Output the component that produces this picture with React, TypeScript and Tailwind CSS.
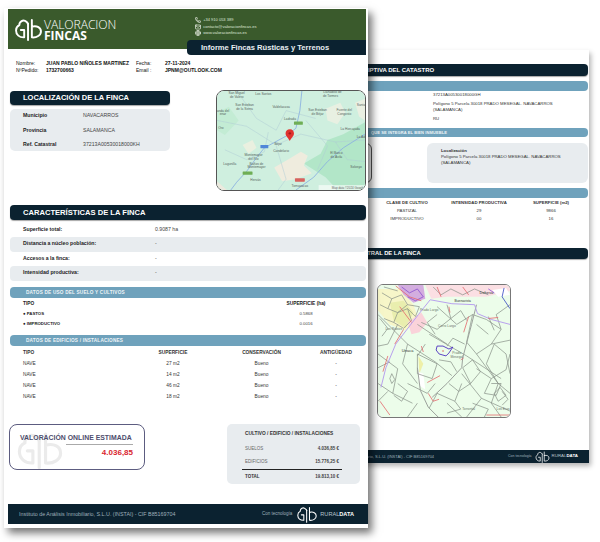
import type { ReactNode } from "react";
import { Phone, Mail, Globe } from "lucide-react";

const SANS = "font-['Liberation_Sans',Arial,sans-serif]";

function GibLogo({ className, stroke = "#ffffff", width = 2 }: { className: string; stroke?: string; width?: number }) {
  return (
    <svg viewBox="0 0 28 24" className={className} fill="none" stroke={stroke} strokeWidth={width} strokeLinecap="round" strokeLinejoin="round">
      <path d="M13.5 6C12 3 9 2 6.8 3.200C5 4.200 4.300 5.800 4.500 7.500C2.300 8.500 1 10.500 1 13C1 17.500 4.500 20.500 9.500 20.200V12.500H6" />
      <path d="M13.5 6V23" />
      <path d="M17.500 2V20.200C22.500 20.800 27 18 27 14C27 10 23 7.500 17.500 9" />
    </svg>
  );
}

function SectionBar({ children, className = "" }: { children: ReactNode; className?: string }) {
  return (
    <div className={`flex items-center rounded-[4px] bg-[#0b2230] text-white font-bold shadow-[0_1px_1px_rgba(0,0,0,0.35)] ${className}`}>
      {children}
    </div>
  );
}

function BlueBar({ children, className = "" }: { children?: ReactNode; className?: string }) {
  return (
    <div className={`flex items-center rounded-[4px] bg-[#6fa2bc] text-[#eef4f7] font-bold ${className}`}>
      {children}
    </div>
  );
}

function RoadMap() {
  return (
    <svg viewBox="0 0 150 101" className="w-full h-full block" preserveAspectRatio="none">
      <rect width="150" height="101" fill="#cfefdf" />
      <path d="M0 22L12 16L22 30L8 45L0 40Z" fill="#c3ecd4" />
      <path d="M88 74L105 64L112 50L128 44L150 32V101H122L110 88Z" fill="#b2e6c8" />
      <path d="M58 78L72 70L85 62L92 66L88 76L96 84L80 90L66 92Z" fill="#efecde" />
      <path d="M110 18L125 12L130 22L122 34L112 30Z" fill="#e8f0e2" />
      <path d="M26 55L36 50L40 58L32 64Z" fill="#eaf0e0" />
      <path d="M0 92L10 101H0Z" fill="#ece9dd" />
      <path d="M140 12L150 8V30L144 26Z" fill="#eaefe2" />
      <g fill="none" stroke="#aecbd6" strokeWidth="0.5">
        <path d="M0 30L30 36L60 55L85 44L120 52L150 50" />
        <path d="M20 0L40 28L60 40L70 20L100 28" />
        <path d="M90 30L112 56L102 80" />
        <path d="M8 60L30 70L48 62L52 42" />
        <path d="M60 56L70 90L62 101" />
        <path d="M120 52L132 70L150 72" />
      </g>
      <g fill="none" stroke="#8db2e0" strokeWidth="0.9">
        <path d="M86 0L84 20L80 38L70 46L48 58L40 68L30 82L20 93L14 101" />
        <path d="M150 44L128 58L112 72L98 88L80 101" />
      </g>
      <g fill="#56635e" fontFamily="Liberation Sans, Arial, sans-serif" fontSize="3.300" textAnchor="middle">
        <text x="20" y="3">San Miguel</text>
        <text x="20" y="7">de Valero</text>
        <text x="47" y="4">Los Santos</text>
        <text x="117" y="2">Llanadillo de</text>
        <text x="115" y="6">de Tormes</text>
        <text x="28" y="15">San Esteban</text>
        <text x="28" y="19">de la Sierra</text>
        <text x="65" y="17">Valdelacasa</text>
        <text x="6" y="21">anda del</text>
        <text x="6" y="25">enar</text>
        <text x="102" y="20">San Esteban</text>
        <text x="102" y="24">de Béjar</text>
        <text x="129" y="20">Fuente del</text>
        <text x="129" y="24">Congosto</text>
        <text x="146" y="15">Santa</text>
        <text x="74" y="30">Ladrada</text>
        <text x="4" y="39">Oro</text>
        <text x="135" y="40">La Horcajada</text>
        <text x="150" y="48" textAnchor="end">La Ad</text>
        <text x="62" y="55">Béjar</text>
        <text x="65" y="62">Candelario</text>
        <text x="37" y="66">Montemayor</text>
        <text x="37" y="70">del Río</text>
        <text x="13" y="75">Lagunilla</text>
        <text x="40" y="75">Baños de</text>
        <text x="40" y="79">Montemayor</text>
        <text x="121" y="64">El Barco</text>
        <text x="121" y="68">de Ávila</text>
        <text x="141" y="79">Solosyo</text>
        <text x="39" y="92">Hervás</text>
        <text x="84" y="98">Tornavacas</text>
      </g>
      <rect x="78" y="31" width="9" height="3.500" rx="0.6" fill="#6fae55" />
      <rect x="44" y="55" width="8" height="3.500" rx="0.6" fill="#4f86d8" />
      <rect x="26" y="82" width="10" height="3.500" rx="0.6" fill="#6fae55" />
      <rect x="79" y="89" width="10" height="3.500" rx="0.6" fill="#d8625e" />
      <path d="M74 39C71 39 69.500 41 69.500 43.300C69.500 46 72.500 48 73.800 51C75 48 78 46 78 43.300C78 41 76.500 39 74 39Z" fill="#e0332f" />
      <circle cx="73.800" cy="43.200" r="1.200" fill="#a01c1a" />
      <rect x="103" y="96" width="47" height="5" fill="#ffffff" opacity="0.6" />
      <text x="149" y="99.700" fontFamily="Liberation Sans, Arial, sans-serif" fontSize="3" fill="#666" textAnchor="end">Map data ©2024 Google</text>
    </svg>
  );
}

function CadastreMap() {
  const parcels = [
    "M0 30L30 60L58 78L75 92", "M52 50L90 72L125 95", "M96 30L90 58L100 70L115 60L125 45L110 35Z",
    "M70 20L74 34L60 45L44 38", "M100 70L122 100L134 110", "M85 90L105 115L90 134", "M105 115L134 128",
    "M0 70L20 85L15 110L35 120", "M30 100L50 110L58 100", "M122 100L115 120L125 134", "M60 22L80 40L96 30",
    "M40 40L70 60", "M118 60L130 70L134 90", "M118 60L110 80L122 100", "M100 85L115 95L108 110",
    "M60 110L78 118L85 100", "M30 60L25 80L40 100", "M0 100L15 110", "M134 20L120 30L125 45",
    "M20 40L10 60L0 62", "M40 70L60 80L55 95L40 90Z", "M108 110L120 112L125 100L115 100", "M70 120L85 134",
    "M40 120L30 134", "M14 90L17 96L14 100L12 95Z", "M60 110L52 125", "M72 100L82 108L94 100L86 84",
    "M94 100L104 88L96 76L86 84", "M115 95L130 86L134 70", "M124 104L130 112L122 118L118 110Z",
    "M126 108L132 116L126 122", "M20 100L30 108L24 118L16 112", "M78 118L84 126L70 130", "M96 120L112 126L108 134",
    "M0 118L10 108", "M115 60L134 56", "M112 32L118 46", "M74 34L84 26L90 36", "M62 76L74 78L80 88",
    "M48 60L40 72", "M0 84L12 78", "M60 30L50 38L58 50", "M100 40L112 50", "M88 60L76 54L70 62",
  ];
  const dense = [
    "M4 8L14 14L10 24L2 20", "M14 14L24 10L30 20L20 28", "M10 24L20 28L16 38L6 34", "M20 28L30 24L34 36L26 44L16 38",
    "M30 20L42 22L38 32L30 24", "M2 34L10 44L4 52", "M6 2L20 6", "M56 2L64 10L74 4L86 10L98 4L112 10",
  ];
  return (
    <svg viewBox="0 0 134 134" className="w-full h-full block" preserveAspectRatio="none">
      <rect width="134" height="134" fill="#ecfdea" />
      <path d="M0 4H22L36 20L40 32L28 46L12 40L0 26Z" fill="#f7f6c9" />
      <path d="M12 18L26 16L36 28L28 44L16 36Z" fill="#e9eeae" />
      <path d="M48 0H134V6L110 12L70 12L54 14Z" fill="#fbdfe3" />
      <path d="M30 38L44 28L50 38L42 48L34 50Z" fill="#fad3da" />
      <path d="M20 0H46L48 14L36 18L26 10Z" fill="#d3addf" />
      <path d="M116 5L130 3L134 10L122 12Z" fill="#ffffff" />
      <path d="M41 72L46 80L42 90Z" fill="#eef0a8" />
      <path d="M40 88L46 90L48 106L42 102Z" fill="#ffffff" />
      <g fill="none" stroke="#858d84" strokeWidth="0.7">
        {parcels.map((d) => <path key={d} d={d} />)}
        {dense.map((d) => <path key={d} d={d} />)}
      </g>
      <g fill="none" stroke="#9a9f9a" strokeWidth="1">
        <path d="M100 20L95 40L86 74L85 84L70 100L55 114" />
        <path d="M40 84L43 107L51 124L61 134" />
      </g>
      <g fill="none" stroke="#b7a0ee" strokeWidth="1">
        <path d="M53 15L41 30L18 60L8 84L3 104" />
        <path d="M53 15L75 19L98 20L101 29L115 35L134 40" />
      </g>
      <g fill="none" stroke="#8a4fd0" strokeWidth="0.8">
        <path d="M24 2L32 8L40 4L46 12L38 16L30 12" />
        <path d="M112 4L118 8" />
      </g>
      <g fill="none" stroke="#e4656a" strokeWidth="0.8">
        <path d="M18 1L32 12L44 16" />
        <path d="M22 22L34 38" />
        <path d="M10 72L5 88" />
        <path d="M72 22L73 28" />
        <path d="M92 32L87 48" />
        <path d="M50 99L63 92" />
        <path d="M51 110L56 118L62 116" />
        <path d="M2 118L12 132" />
        <path d="M112 34L122 33" />
        <path d="M26 45L17 60" />
        <path d="M44 62L46 68" />
        <path d="M110 132H134" />
        <path d="M84 76L87 74" />
        <path d="M60 2L64 12" />
        <path d="M86 2L92 10" />
      </g>
      <path d="M60 62L66 62L72 65L76 63L72 69L69 72L62 70L59 66Z" fill="none" stroke="#4b2fc0" strokeWidth="0.9" />
      <circle cx="66" cy="67" r="0.800" fill="#e25a5a" />
      <path d="M128 3L126 12L134 24" fill="none" stroke="#3043c0" strokeWidth="0.8" />
      <g fill="#6c756c" fontFamily="Liberation Sans, Arial, sans-serif" fontSize="3.400" textAnchor="middle">
        <text x="86" y="17" fill="#333">Buenavista</text>
        <text x="52" y="26">Prado Largo</text>
        <text x="70" y="43">Cerro Largo</text>
        <text x="80" y="70">Prado</text>
        <text x="80" y="74">Mesegal</text>
        <text x="30" y="68" fontSize="4" fill="#333">Urraca</text>
        <text x="16" y="46">Los Rubios</text>
        <text x="92" y="127">Torrontal</text>
        <text x="127" y="127">Los Eras</text>
        <text x="110" y="9" fill="#333" fontSize="4">Dehesa</text>
      </g>
    </svg>
  );
}

function BackPage() {
  return (
    <div className="absolute left-[225px] top-[50px] w-[364px] h-[413px] bg-white flex flex-col shadow-[2px_3px_5px_rgba(0,0,0,0.3)]">
      <div className="mt-[14px] mr-px ml-1">
        <SectionBar className="h-[12px] pl-[84px] text-[6px] whitespace-nowrap">CONSULTA DESCRIPTIVA DEL CATASTRO</SectionBar>
        <BlueBar className="mt-[5px] h-[10px] pl-[94px] text-[4px] whitespace-nowrap">DATOS DEL INMUEBLE</BlueBar>
        <div className="ml-[204px] mt-[1px] text-[4.300px] leading-[6px] text-[#333]">
          <p>37213A00530018000GH</p>
          <p className="mt-[3px] w-[132px]">Polígono 5 Parcela 30018 PRADO MESEGAL. NAVACARROS (SALAMANCA)</p>
          <p className="mt-[3px]">RU</p>
        </div>
        <BlueBar className="mt-[6px] h-[9px] pl-[142px] text-[4px] tracking-[0.1px] whitespace-nowrap">QUE SE INTEGRA EL BIEN INMUEBLE</BlueBar>
        <div className="flex mt-[6px] h-[40px]">
          <div className="ml-[90px] w-[53px] rounded-[6px] border border-[#555] bg-white" />
          <div className="ml-[55px] flex-1 rounded-[6px] bg-[#e8ecef] pl-[14px] pt-[5px] text-[4.300px] leading-[6px] text-[#333]">
            <p className="font-bold">Localización</p>
            <p className="w-[132px]">Polígono 5 Parcela 30018 PRADO MESEGAL. NAVACARROS (SALAMANCA)</p>
          </div>
        </div>
        <BlueBar className="mt-[5px] h-[10px]" />
        <div className="ml-[142px] mt-[1px] text-[4.300px] text-[#333] text-center grid grid-cols-[72px_72px_72px] leading-[8px]">
          <span className="font-bold whitespace-nowrap">CLASE DE CULTIVO</span>
          <span className="font-bold whitespace-nowrap">INTENSIDAD PRODUCTIVA</span>
          <span className="font-bold whitespace-nowrap">SUPERFICIE (m2)</span>
          <span>PASTIZAL</span><span>29</span><span>9866</span>
          <span>IMPRODUCTIVO</span><span>00</span><span>16</span>
        </div>
      </div>
      <div className="mt-[25px] mr-px ml-1">
        <SectionBar className="h-[11px] pl-[75px] text-[5.800px] whitespace-nowrap">CARTOGRAFÍA CATASTRAL DE LA FINCA</SectionBar>
        <div className="ml-[148px] mt-[25px] w-[134px] h-[134px] rounded-[6px] border border-[#777] overflow-hidden">
          <CadastreMap />
        </div>
      </div>
      <div className="mt-auto h-[13px] bg-[#0b2230] flex items-center pl-[92px] pr-[11px] text-[4px] text-[#9fb0bb]">
        <span className="whitespace-nowrap">Instituto de Análisis Inmobiliario, S.L.U. (INSTAI) - CIF B85169704</span>
        <span className="ml-auto text-[3.500px] whitespace-nowrap">Con tecnología</span>
        <GibLogo className="ml-[3px] w-[15px] h-[12px]" width={1.5} />
        <span className="ml-[2px] text-[4.400px] text-[#b9c4cc] whitespace-nowrap">RURAL<b className="text-white">DATA</b></span>
      </div>
    </div>
  );
}

function InfoRow({ label, value, shaded }: { label: string; value: string; shaded?: boolean }) {
  return (
    <div className={`flex items-center h-[14.500px] rounded-[4px] pl-[13px] text-[5.200px] ${shaded ? "bg-[#e8ecef]" : ""}`}>
      <span className="w-[132px] font-bold text-[#222]">{label}</span>
      <span className="text-[#444]">{value}</span>
    </div>
  );
}

const EDIFICIOS = ["27 m2", "14 m2", "46 m2", "18 m2"];

function FrontPage() {
  return (
    <div className={`absolute left-[4px] top-[8px] w-[364px] h-[520px] bg-white flex flex-col shadow-[4px_5px_8px_rgba(0,0,0,0.55)] ${SANS}`}>
      {/* cabecera */}
      <div className="relative ml-[4px] mr-[2px] mt-px h-[40px] bg-[#3a5a2c] text-white flex">
        <div className="flex items-center pl-[7px] pt-px">
          <GibLogo className="w-[27px] h-[23px]" />
          <div className="ml-[2px] font-['Open_Sans',sans-serif]">
            <p className="text-[12.200px] font-light leading-[11px] tracking-[-0.1px] whitespace-nowrap">VALORACION</p>
            <p className="text-[12px] font-bold leading-[11px] whitespace-nowrap">FINCAS</p>
          </div>
        </div>
        <div className="ml-[79px] pt-[8px] text-[4px] leading-[6.500px] text-[#dfe6da]">
          <p className="flex items-center gap-[2px] whitespace-nowrap"><Phone className="w-[6px] h-[6px]" strokeWidth={3} />+34 910 053 389</p>
          <p className="flex items-center gap-[2px] whitespace-nowrap"><Mail className="w-[6px] h-[6px]" strokeWidth={3} />contacto@valoracionfincas.es</p>
          <p className="flex items-center gap-[2px] whitespace-nowrap"><Globe className="w-[6px] h-[6px]" strokeWidth={3} />www.valoracionfincas.es</p>
        </div>
        <div className="absolute right-0 top-[31px] w-[179px] h-[15px] bg-[#0b2230] rounded-l-[4px] flex items-center pl-[14px] text-[7.600px] font-bold text-[#e8edf0] whitespace-nowrap">
          Informe Fincas Rústicas y Terrenos
        </div>
      </div>

      {/* datos del cliente */}
      <div className="mt-[11px] ml-[12px] grid grid-cols-[30px_90px_29px_1fr] text-[5px] leading-[7px] text-[#111]">
        <span>Nombre:</span><b className="whitespace-nowrap">JUAN PABLO NIÑOLES MARTINEZ</b>
        <span>Fecha:</span><b>27-11-2024</b>
        <span>NºPedido:</span><b>1732700663</b>
        <span>Email :</span><b>JPNM@OUTLOOK.COM</b>
      </div>

      {/* localización */}
      <div className="mt-[17px] ml-[6px] mr-[2px] flex justify-between">
        <div className="w-[160px]">
          <SectionBar className="h-[14px] pl-[13px] text-[7.500px]">LOCALIZACIÓN DE LA FINCA</SectionBar>
          <div className="mt-[4px] h-[42px] rounded-[5px] bg-[#e8ecef] pl-[13px] flex flex-col justify-center text-[5.200px] leading-[14.500px]">
            <div className="flex"><b className="w-[60px] text-[#222]">Municipio</b><span className="text-[#444]">NAVACARROS</span></div>
            <div className="flex"><b className="w-[60px] text-[#222]">Provincia</b><span className="text-[#444]">SALAMANCA</span></div>
            <div className="flex"><b className="w-[60px] text-[#222]">Ref. Catastral</b><span className="text-[#444]">37213A00530018000KH</span></div>
          </div>
        </div>
        <div className="w-[150px] h-[101px] -mt-px rounded-[8px] border border-[#555] overflow-hidden">
          <RoadMap />
        </div>
      </div>

      {/* características */}
      <div className="mt-[14px] ml-[6px] mr-[2px]">
        <SectionBar className="h-[15px] pl-[13px] text-[7.600px]">CARACTERÍSTICAS DE LA FINCA</SectionBar>
        <div className="mt-[2.500px] flex flex-col">
          <InfoRow label="Superficie total:" value="0.9087 ha" />
          <InfoRow label="Distancia a núcleo población:" value="-" shaded />
          <InfoRow label="Accesos a la finca:" value="-" />
          <InfoRow label="Intensidad productiva:" value="-" shaded />
        </div>

        <BlueBar className="mt-[6.500px] h-[11px] pl-[16px] text-[4.700px] tracking-[0.2px]">DATOS DE USO DEL SUELO Y CULTIVOS</BlueBar>
        <div className="mt-[1px] pl-[13px] grid grid-cols-[261px_44px] text-[4.800px] leading-[10px] text-[#222]">
          <b>TIPO</b><b className="whitespace-nowrap text-center">SUPERFICIE (ha)</b>
          <b className="text-[4.300px]">● PASTOS</b><span className="text-center text-[4.300px] text-[#444]">0.5868</span>
          <b className="text-[4.300px]">● IMPRODUCTIVO</b><span className="text-center text-[4.300px] text-[#444]">0.0016</span>
        </div>

        <BlueBar className="mt-[6px] h-[11px] pl-[16px] text-[4.700px] tracking-[0.2px]">DATOS DE EDIFICIOS / INSTALACIONES</BlueBar>
        <div className="mt-[1px] pl-[13px] grid grid-cols-[134px_32px_51px_43px_35px_36px] text-[4.800px] leading-[11px] text-[#333]">
          <b>TIPO</b>
          <b className="text-center">SUPERFICIE</b>
          <b className="col-start-4 text-center whitespace-nowrap">CONSERVACIÓN</b>
          <b className="col-start-6 text-center whitespace-nowrap">ANTIGÜEDAD</b>
          {EDIFICIOS.map((m) => (
            <div key={m} className="contents">
              <span>NAVE</span>
              <span className="text-center">{m}</span>
              <span className="col-start-4 text-center">Bueno</span>
              <span className="col-start-6 text-center">-</span>
            </div>
          ))}
        </div>
      </div>

      {/* valoración */}
      <div className="mt-[22px] ml-[5px] flex items-start">
        <div className="relative w-[136px] h-[46px] rounded-[8px] border border-[#5c5c80] overflow-hidden">
          <GibLogo className="absolute left-[6px] top-[6px] w-[48px] h-[38px] opacity-15" stroke="#777777" width={2} />
          <div className="relative pl-[10px] pr-[11px] pt-[9px]">
            <p className="text-[6.900px] leading-[8px] font-bold text-[#4d4d6c] whitespace-nowrap">VALORACIÓN ONLINE ESTIMADA</p>
            <div className="ml-[46px] mt-[2px] h-px bg-[#aaa]" />
            <p className="mt-[2px] text-right text-[8px] leading-[12px] font-bold text-[#d9252f]">4.036,85</p>
          </div>
        </div>
        <div className="ml-[82px] w-[133px] h-[60px] rounded-[5px] bg-[#e8ecef] pl-[15px] pr-[18px] pt-[7px] text-[#333]">
          <p className="pl-[3px] text-[4.800px] leading-[6px] font-bold whitespace-nowrap">CULTIVO / EDIFICIO / INSTALACIONES</p>
          <div className="flex justify-between px-[3px] mt-[5px] h-[14px] items-center text-[4.500px]"><span className="text-[#666]">SUELOS</span><b className="text-[#444]">4.036,85 €</b></div>
          <div className="flex justify-between px-[3px] h-[14px] items-center text-[4.500px] border-b-[0.7px] border-[#222]"><span className="text-[#666]">EDIFICIOS</span><b className="text-[#444]">15.776,25 €</b></div>
          <div className="flex justify-between px-[3px] h-[15px] items-center text-[4.500px]"><b>TOTAL</b><b className="text-[#444]">19.813,10 €</b></div>
        </div>
      </div>

      {/* pie */}
      <div className="mt-auto mb-[4px] ml-[4px] h-[20px] bg-[#0b2230] flex items-center pl-[11px] pr-[14px] text-[5.350px] text-[#9fb0bb]">
        <span className="whitespace-nowrap">Instituto de Análisis Inmobiliario, S.L.U. (INSTAI) - CIF B85169704</span>
        <span className="ml-auto text-[4.500px] whitespace-nowrap">Con tecnología</span>
        <GibLogo className="ml-[4px] w-[22px] h-[17px]" width={1.5} />
        <span className="ml-[2px] text-[5.600px] text-[#b9c4cc] whitespace-nowrap">RURAL<b className="text-white">DATA</b></span>
      </div>
    </div>
  );
}

export default function App() {
  return (
    <div className={`relative w-[600px] h-[542px] overflow-hidden bg-white ${SANS}`}>
      <BackPage />
      <FrontPage />
    </div>
  );
}
